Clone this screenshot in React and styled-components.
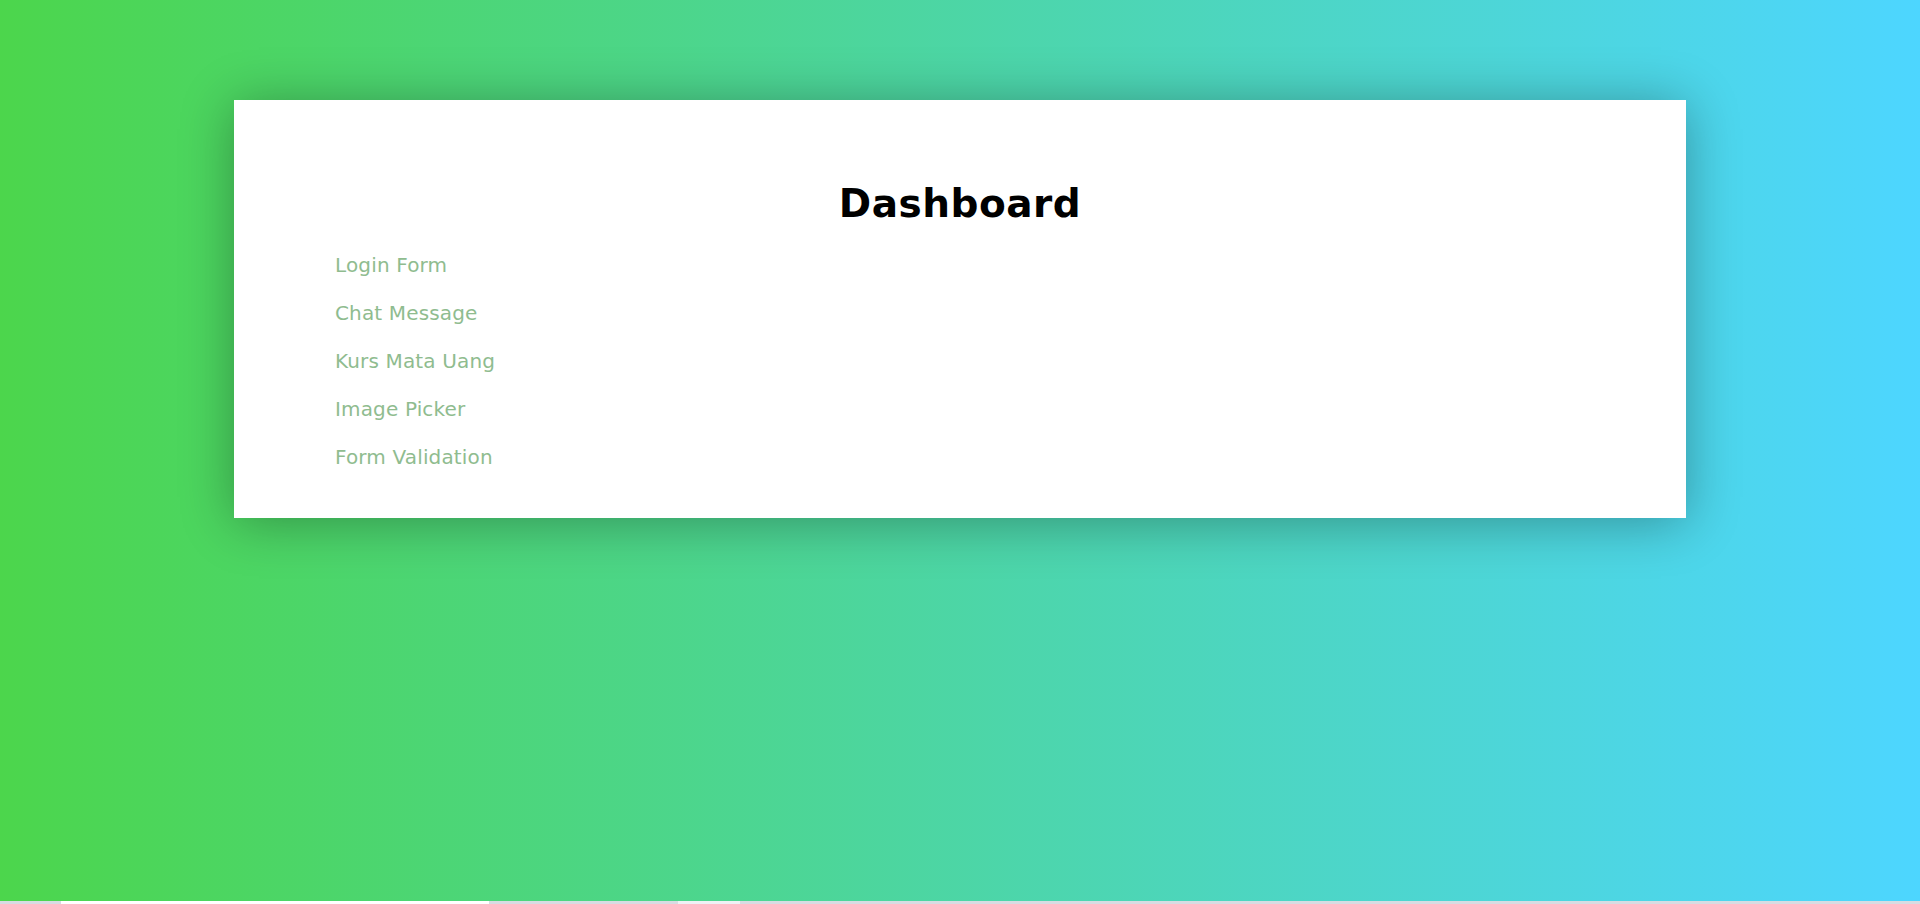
import React from "react";
import styled, { createGlobalStyle } from "styled-components";

const GlobalStyle = createGlobalStyle`
	html, body {
		margin: 0;
		padding: 0;
		background: #d7dce2;
		font-family: "DejaVu Sans", Verdana, sans-serif;
	}
`;

const Page = styled.div`
	height: 901px;
	background: linear-gradient(to right, #4cd64c 0%, #4dd6ff 100%);
	display: flex;
	flex-direction: column;
	align-items: center;
	padding-top: 100px;
	box-sizing: border-box;
`;

const Card = styled.div`
	width: 1452px;
	background: #fff;
	box-sizing: border-box;
	padding: 82px 101px 37px;
	box-shadow: 0 4px 50px rgba(0, 0, 0, 0.32);
`;

const Title = styled.h1`
	margin: 0 0 15px;
	text-align: center;
	font-size: 39px;
	letter-spacing: 0.5px;
	line-height: 44px;
	font-weight: bold;
	color: #000;
`;

const Menu = styled.ul`
	list-style: none;
	margin: 0;
	padding: 0;
`;

const MenuLink = styled.a`
	display: block;
	font-size: 20px;
	letter-spacing: 0.15px;
	line-height: 48px;
	color: darkseagreen;
	text-decoration: none;
`;

const Taskbar = styled.div`
	height: 3px;
	display: flex;
	background: #d7dce2;
`;

const TaskSlot = styled.div`
	margin-left: ${(p) => p.$left}px;
	width: ${(p) => p.$width}px;
	background: ${(p) => (p.$light ? "#eef2f5" : "#fff")};
`;

const links = ["Login Form", "Chat Message", "Kurs Mata Uang", "Image Picker", "Form Validation"];

export default function App() {
	return (
		<>
			<GlobalStyle />
			<Page>
				<Card>
					<Title>Dashboard</Title>
					<Menu>
						{links.map((l) => (
							<li key={l}>
								<MenuLink href="#">{l}</MenuLink>
							</li>
						))}
					</Menu>
				</Card>
			</Page>
			<Taskbar>
				<TaskSlot $left={61} $width={428} />
				<TaskSlot $left={189} $width={62} $light />
			</Taskbar>
		</>
	);
}
